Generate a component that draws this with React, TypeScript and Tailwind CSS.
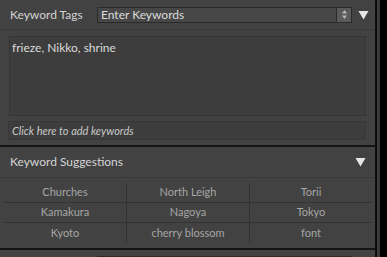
import React from "react";

const Tri = () => (
  <svg width="11" height="10" viewBox="0 0 11 10">
    <polygon points="0.5,1 10.5,1 5.5,9.5" fill="#e6e6e6" />
  </svg>
);

const Stepper = () => (
  <div className="w-[15px] h-full bg-[#5a5a5a] border-l border-[#2a2a2a] flex items-center justify-center">
    <svg width="7" height="11" viewBox="0 0 7 11">
      <polygon points="3.5,1 6,4.5 1,4.5" fill="#b8b8b8" />
      <polygon points="3.5,10 6,6.5 1,6.5" fill="#b8b8b8" />
    </svg>
  </div>
);

export default function App() {
  const words = [
    "Churches", "North Leigh", "Torii",
    "Kamakura", "Nagoya", "Tokyo",
    "Kyoto", "cherry blossom", "font",
  ];
  const rows = [words.slice(0, 3), words.slice(3, 6), words.slice(6, 9)];
  return (
    <div className="w-[387px] h-[257px] bg-black flex overflow-hidden" style={{ fontFamily: "Lato, 'Noto Sans', sans-serif" }}>
      <div className="w-[375px] h-full bg-[#424242] flex flex-col overflow-hidden">
        {/* header */}
        <div className="shrink-0 h-[30px] flex items-center pl-[10px] border-b border-[#393939]">
          <div className="w-[87px] text-[12px] text-[#d4d4d4]">Keyword Tags</div>
          <div className="w-[255px] h-[16px] bg-[#474747] border border-[#2a2a2a] flex items-stretch">
            <div className="flex-1 pl-[3px] text-[12px] leading-[14px] text-[#dcdcdc]">Enter Keywords</div>
            <Stepper />
          </div>
          <div className="ml-[6px] flex items-center"><Tri /></div>
        </div>
        {/* textarea */}
        <div className="shrink-0 pl-[9px] pr-[9px] pt-[6px]">
          <div className="h-[80px] bg-[#3d3d3d] border border-[#363636] px-[2px] pt-[2px] text-[12px] text-[#dadada]">
            frieze, Nikko, shrine
          </div>
        </div>
        <div className="shrink-0 pl-[8px] pr-[9px] pt-[5px]">
          <div className="h-[19px] bg-[#3d3d3d] border border-[#383838] pl-[3px] text-[11px] leading-[17px] italic text-[#c8c8c8]">
            Click here to add keywords
          </div>
        </div>
        <div className="shrink-0 mt-[5px] h-[2px] bg-[#151515]" />
        {/* suggestions header */}
        <div className="shrink-0 h-[31px] flex items-center pl-[10px] pr-[9px] border-b border-[#393939]">
          <div className="flex-1 text-[12px] text-[#d4d4d4]">Keyword Suggestions</div>
          <Tri />
        </div>
        <div className="shrink-0 pl-[4px] pr-[3px] pt-[5px] h-[70px]">
          {rows.map((r, i) => (
            <div key={i} className={`flex h-[20px] ${i < 2 ? "border-b border-[#333333]" : ""}`}>
              {r.map((w, j) => (
                <div
                  key={j}
                  className={`flex-1 flex items-center justify-center text-[11px] text-[#a6a6a6] ${j < 2 ? "border-r border-[#333333]" : ""}`}
                >
                  {w}
                </div>
              ))}
            </div>
          ))}
        </div>
        <div className="shrink-0 h-[2px] bg-[#151515]" />
        <div className="shrink-0 pl-[97px] pt-[6px]">
          <div className="w-[255px] h-[16px] bg-[#474747] border border-[#2a2a2a] flex justify-end">
            <Stepper />
          </div>
        </div>
      </div>
      <div className="w-[2px] h-full bg-[#0d0d0d]" />
      <div className="w-[3px] h-full bg-[#3a3a3a]" />
      <div className="flex-1 h-full bg-black" />
    </div>
  );
}
